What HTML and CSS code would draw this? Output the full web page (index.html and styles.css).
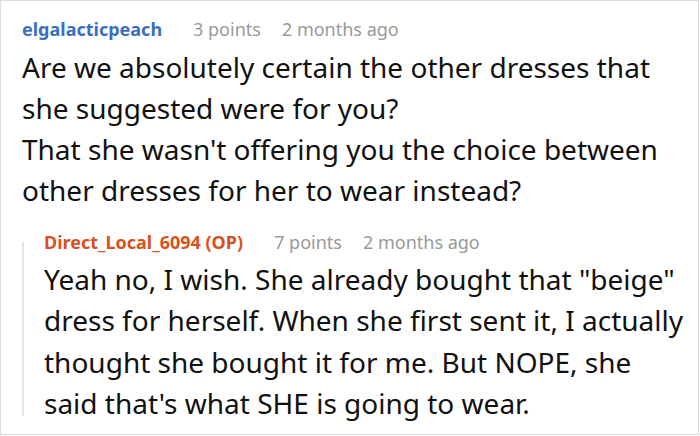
FILE: index.html
```html
<!DOCTYPE html>
<html>
<head>
<meta charset="utf-8">
<link rel="stylesheet" href="styles.css">
</head>
<body>
<div class="frame">
  <div class="comment">
    <div class="meta">
      <span class="author">elgalacticpeach</span>
      <span class="info">3 points</span>
      <span class="info">2 months ago</span>
    </div>
    <div class="body">
      <p>Are we absolutely certain the other dresses that she suggested were for you?</p>
      <p>That she wasn't offering you the choice between other dresses for her to wear instead?</p>
    </div>
    <div class="reply">
      <div class="meta">
        <span class="author op">Direct_Local_6094 (OP)</span>
        <span class="info">7 points</span>
        <span class="info">2 months ago</span>
      </div>
      <div class="body reply-body">
        <p>Yeah no, I wish. She already bought that "beige" dress for herself. When she first sent it, I actually thought she bought it for me. But NOPE, she said that's what SHE is going to wear.</p>
      </div>
    </div>
  </div>
</div>
</body>
</html>
```
FILE: styles.css
```css
* { box-sizing: border-box; }
html, body { margin: 0; padding: 0; background: #fff; }
body { font-family: "Noto Sans", "Open Sans", sans-serif; color: #111; }
.frame {
  width: 699px;
  height: 435px;
  border: 1px solid #dcdcdc;
  padding: 16px 0 0 21px;
  overflow: hidden;
}
.meta {
  display: flex;
  align-items: baseline;
  gap: 21px;
  font-size: 18px;
  line-height: 24px;
  white-space: nowrap;
}
.author { font-weight: 700; color: #3a6fc0; margin-right: 10px; }
.author.op { color: #d9501e; }
.info { color: #999; }
.body {
  font-size: 28px;
  line-height: 41.3px;
  margin-top: 5.5px;
  width: 661px;
}
.body p { margin: 0; }
.reply {
  position: relative;
  margin-top: 18.3px;
  padding-left: 22px;
}
.reply::before {
  content: "";
  position: absolute;
  left: 0;
  top: 12px;
  bottom: 8px;
  width: 2px;
  background: #e4e4e4;
}
.reply-body { margin-top: 5px; width: 640px; }
```
